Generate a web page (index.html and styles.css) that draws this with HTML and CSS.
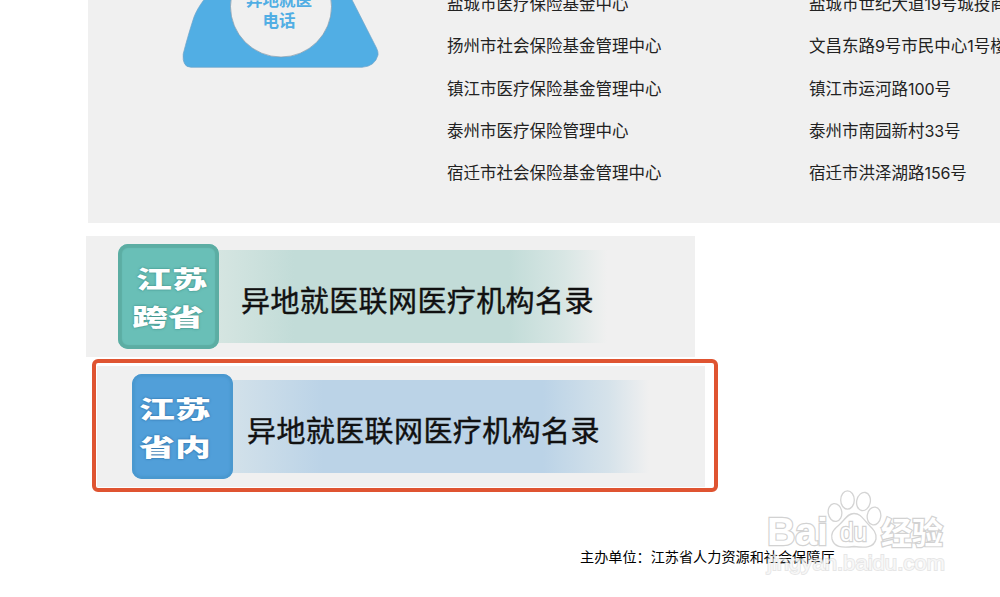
FILE: index.html
```html
<!DOCTYPE html>
<html lang="zh-CN">
<head>
  <meta charset="UTF-8">
  <meta name="viewport" content="width=device-width, initial-scale=1.0">
  <title>江苏省异地就医</title>
  <link rel="stylesheet" href="styles.css">
</head>
<body>
  <section class="contacts">
    <div class="phone">
      <svg class="phone-icon" width="200" height="70" viewBox="180 0 200 70">
        <path d="M212 -10 C203 0 197 9 194 17 C190 29 186 43 183.200 54 Q182 67 191 67.300 L362 67.300 Q375 66.500 378 55 Q378.500 52 376.500 48 L348 -8 Z" fill="#51aee4" stroke="#6fa3c8" stroke-width="0.7"/>
        <circle cx="281" cy="6.500" r="50.500" fill="#f0f0f0" stroke="#8499ab" stroke-width="0.7"/>
        <text class="phone-text" x="279" y="5.500">异地就医</text>
        <text class="phone-text" x="279" y="26.500">电话</text>
      </svg>
    </div>
    <ul class="list names">
      <li>盐城市医疗保险基金中心</li>
      <li>扬州市社会保险基金管理中心</li>
      <li>镇江市医疗保险基金管理中心</li>
      <li>泰州市医疗保险管理中心</li>
      <li>宿迁市社会保险基金管理中心</li>
    </ul>
    <ul class="list addresses">
      <li>盐城市世纪大道<i>19</i>号城投商务楼</li>
      <li>文昌东路<i>9</i>号市民中心<i>1</i>号楼</li>
      <li>镇江市运河路<i>100</i>号</li>
      <li>泰州市南园新村<i>33</i>号</li>
      <li>宿迁市洪泽湖路<i>156</i>号</li>
    </ul>
  </section>

  <a class="banner green">
    <span class="badge"><b class="top">江苏</b><b>跨省</b></span>
    <span class="strip">异地就医联网医疗机构名录</span>
  </a>

  <div class="frame">
    <a class="banner blue">
      <span class="badge"><b class="top">江苏</b><b>省内</b></span>
      <span class="strip">异地就医联网医疗机构名录</span>
    </a>
  </div>

  <footer class="footer">主办单位：江苏省人力资源和社会保障厅</footer>

  <svg class="watermark" width="200" height="100" viewBox="760 484 200 100">
    <text class="mark" x="767" y="545" textLength="61" lengthAdjust="spacingAndGlyphs">Bai</text>
    <g class="outline">
      <ellipse cx="835" cy="512.500" rx="6.800" ry="9" transform="rotate(-8 835 512.500)"/>
      <ellipse cx="847.500" cy="500" rx="6.800" ry="9.200"/>
      <ellipse cx="863.500" cy="501.500" rx="6.800" ry="9.200" transform="rotate(12 863.500 501.500)"/>
      <ellipse cx="874" cy="516" rx="6.800" ry="9" transform="rotate(8 874 516)"/>
      <path d="M854 513.500 C847 513.500 845 520 839 525 C832 531 831 534 832 539 C834 547 841 548 854 546.500 C865 548 874 548 876 539 C877 533 873 529 869 525 C863 519 861 513.500 854 513.500 Z"/>
    </g>
    <text class="mark du" x="840" y="541" textLength="27" lengthAdjust="spacingAndGlyphs">du</text>
    <text class="mark cn" x="881" y="544">经验</text>
    <text class="mark site" x="767" y="570" textLength="178" lengthAdjust="spacingAndGlyphs">jingyan.baidu.com</text>
  </svg>
</body>
</html>
```
FILE: styles.css
```css
* {
  box-sizing: border-box;
  margin: 0;
  padding: 0;
}

body {
  position: relative;
  width: 1000px;
  height: 597px;
  overflow: hidden;
  background: #fff;
  color: #222;
  font-family: "Liberation Sans", "Noto Sans CJK SC", sans-serif;
}

/* Contact list */
.contacts {
  display: flex;
  height: 223px;
  margin-left: 88px;
  background: #f0f0f0;
  overflow: hidden;
}

.phone {
  width: 359px;
  padding-left: 92px;
  flex-shrink: 0;
}

.phone-icon {
  display: block;
}

.phone-text {
  font-size: 16.5px;
  font-weight: 700;
  fill: #51aee4;
  text-anchor: middle;
}

.list {
  list-style: none;
  flex-shrink: 0;
  margin-top: -17px;
  font-size: 16.5px;
  line-height: 42.3px;
  white-space: nowrap;
}

.list i {
  font-family: Inter, sans-serif;
  font-size: 16px;
  font-style: normal;
  line-height: 1;
  letter-spacing: -0.1px;
}

.names {
  width: 362px;
}

/* Banners */
.banner {
  display: flex;
  width: 609px;
  height: 121px;
  padding: 8px 0 0 32px;
  background: #f0f0f0;
}

.green {
  margin: 13px 0 0 86px;
}

.badge {
  display: flex;
  flex-direction: column;
  align-items: center;
  width: 101px;
  height: 105px;
  flex-shrink: 0;
  padding-top: 17px;
  border-radius: 10px;
  color: #fff;
}

.badge b {
  height: 38px;
  font-size: 26px;
  font-weight: 900;
  line-height: 39px;
  transform: scale(1.38, 0.92);
}

.strip {
  height: 93px;
  margin-top: 6px;
  color: #111;
  font-size: 29px;
  letter-spacing: 0.4px;
  line-height: 104px;
  white-space: nowrap;
  -webkit-text-stroke: 0.4px #111;
}

.green .badge {
  background: #69bfb7;
  box-shadow: inset 0 0 1px 4px #5cada3;
  text-shadow: 0 0 2px #2b7d74;
}

.green .badge .top {
  margin-left: 7px;
}

.green .strip {
  width: 390px;
  padding-left: 22px;
  background: linear-gradient(to right, #d5e5e1 0, #c2dcd8 75px, #c2dcd8 290px, #d8e6e4 345px, #f0f0f0 388px);
}

.frame {
  width: 626px;
  height: 133px;
  margin: 2px 0 0 92px;
  padding: 3px 0 0 1px;
  border: 4px solid #df5431;
  border-radius: 6px;
}

.blue {
  width: 608px;
  padding-left: 35px;
}

.blue .badge {
  background: #519fd9;
  box-shadow: inset 0 0 2px 3px #4a98cf;
  text-shadow: 0 0 2px #205f96;
}

.blue .badge b {
  margin-right: 14px;
}

.blue .strip {
  width: 418px;
  padding-left: 14px;
  background: linear-gradient(to right, #d2e1ea 0, #bbd3e7 90px, #bbd3e7 310px, #d5e2ea 375px, #f0f0f0 416px);
}

.footer {
  margin: 54px 0 0 580px;
  color: #000;
  font-size: 14.15px;
  line-height: 23px;
}

/* Watermark over the footer */
.watermark {
  position: absolute;
  left: 760px;
  top: 484px;
}

.outline {
  fill: #fff;
  stroke: #d4d4d4;
  stroke-width: 1.3px;
}

.mark {
  font-size: 39px;
  font-weight: 700;
  fill: #fff;
  stroke: #d2d2d2;
  paint-order: stroke;
  stroke-width: 2.4px;
}

.du {
  font-size: 25px;
  font-weight: 400;
}

.cn {
  font-size: 31px;
}

.site {
  font-size: 21px;
  font-weight: 400;
  fill: rgba(255, 255, 255, 0.7);
  stroke: rgba(205, 205, 205, 0.5);
  stroke-width: 1.8px;
}
```
